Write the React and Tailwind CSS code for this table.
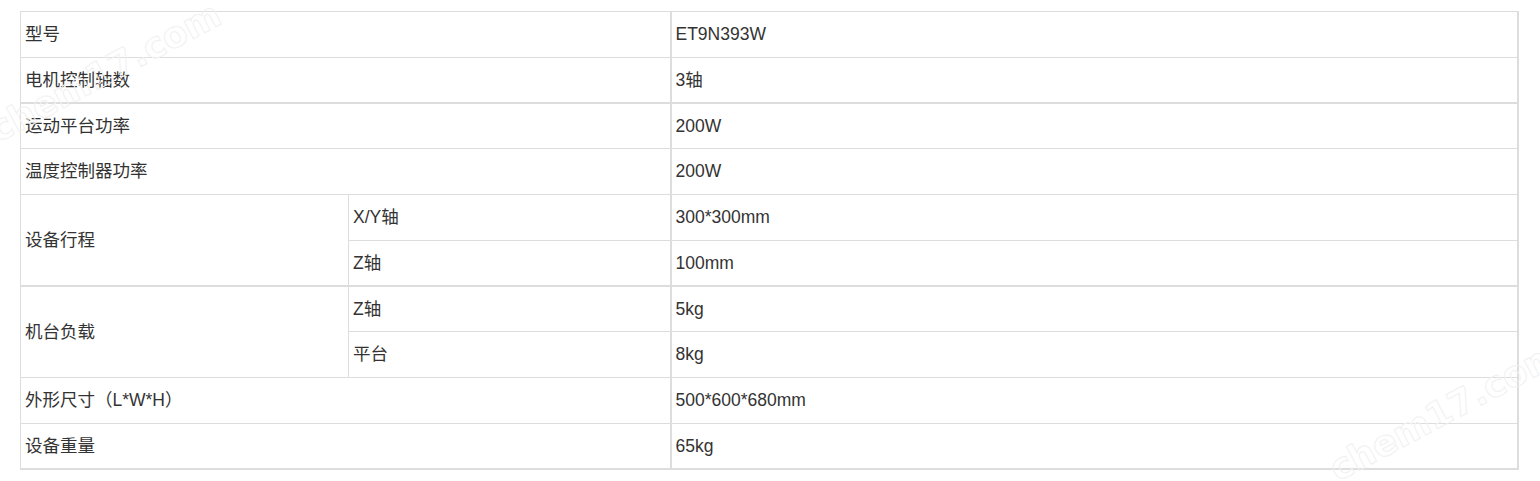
import React from "react";

const ROWS = [
  { label: "型号", value: "ET9N393W" },
  { label: "电机控制轴数", value: "3轴", thick: true },
  { label: "运动平台功率", value: "200W" },
  { label: "温度控制器功率", value: "200W" },
  {
    label: "设备行程",
    sub: [
      { name: "X/Y轴", value: "300*300mm" },
      { name: "Z轴", value: "100mm" },
    ],
    thick: true,
  },
  {
    label: "机台负载",
    sub: [
      { name: "Z轴", value: "5kg" },
      { name: "平台", value: "8kg" },
    ],
  },
  { label: "外形尺寸（L*W*H）", value: "500*600*680mm" },
  { label: "设备重量", value: "65kg", thick: true },
];

const cell = "border border-[#dddddd] px-[4px] align-middle text-left font-normal";

// faint outlined site watermark lying over the table
function Watermark({ className }) {
  return (
    <div
      className={`pointer-events-none absolute select-none w-[240px] h-[44px] leading-[44px] text-center text-[36px] font-bold text-transparent [-webkit-text-stroke:1px_#f1f1f1] rotate-[-28deg] ${className}`}
      style={{ fontFamily: '"DejaVu Sans", sans-serif' }}
      aria-hidden="true"
    >
      chem17.com
    </div>
  );
}

export default function App() {
  return (
    <div
      className="relative w-[1540px] h-[481px] bg-white overflow-hidden text-[17.5px] text-[#333333]"
      style={{ fontFamily: '"Liberation Sans", Arial, "Noto Sans CJK SC", sans-serif' }}
    >
      <div className="pt-[11px] pl-[20px]">
        <table className="border-collapse w-[1499px] table-fixed">
          <colgroup>
            <col className="w-[328px]" />
            <col className="w-[322px]" />
            <col />
          </colgroup>
          <tbody>
            {ROWS.map((r, i) => {
              if (r.sub) {
                return r.sub.map((s, j) => {
                  const lastSub = j === r.sub.length - 1;
                  const b = lastSub && r.thick ? "border-b-2 h-[45px]" : "h-[46px]";
                  return (
                    <tr key={`${i}-${j}`}>
                      {j === 0 && (
                        <td rowSpan={r.sub.length} className={`${cell} ${r.thick ? "border-b-2" : ""}`}>
                          {r.label}
                        </td>
                      )}
                      <td className={`${cell} ${b}`}>{s.name}</td>
                      <td className={`${cell} ${b} border-l-2 border-r-2`}>{s.value}</td>
                    </tr>
                  );
                });
              }
              const b = r.thick ? "border-b-2 h-[45px]" : "h-[46px]";
              return (
                <tr key={i}>
                  <td colSpan={2} className={`${cell} ${b}`}>
                    {r.label}
                  </td>
                  <td className={`${cell} ${b} border-l-2 border-r-2`}>{r.value}</td>
                </tr>
              );
            })}
          </tbody>
        </table>
      </div>
      <Watermark className="left-[-22px] top-[54px]" />
      <Watermark className="left-[1318px] top-[393px]" />
    </div>
  );
}
